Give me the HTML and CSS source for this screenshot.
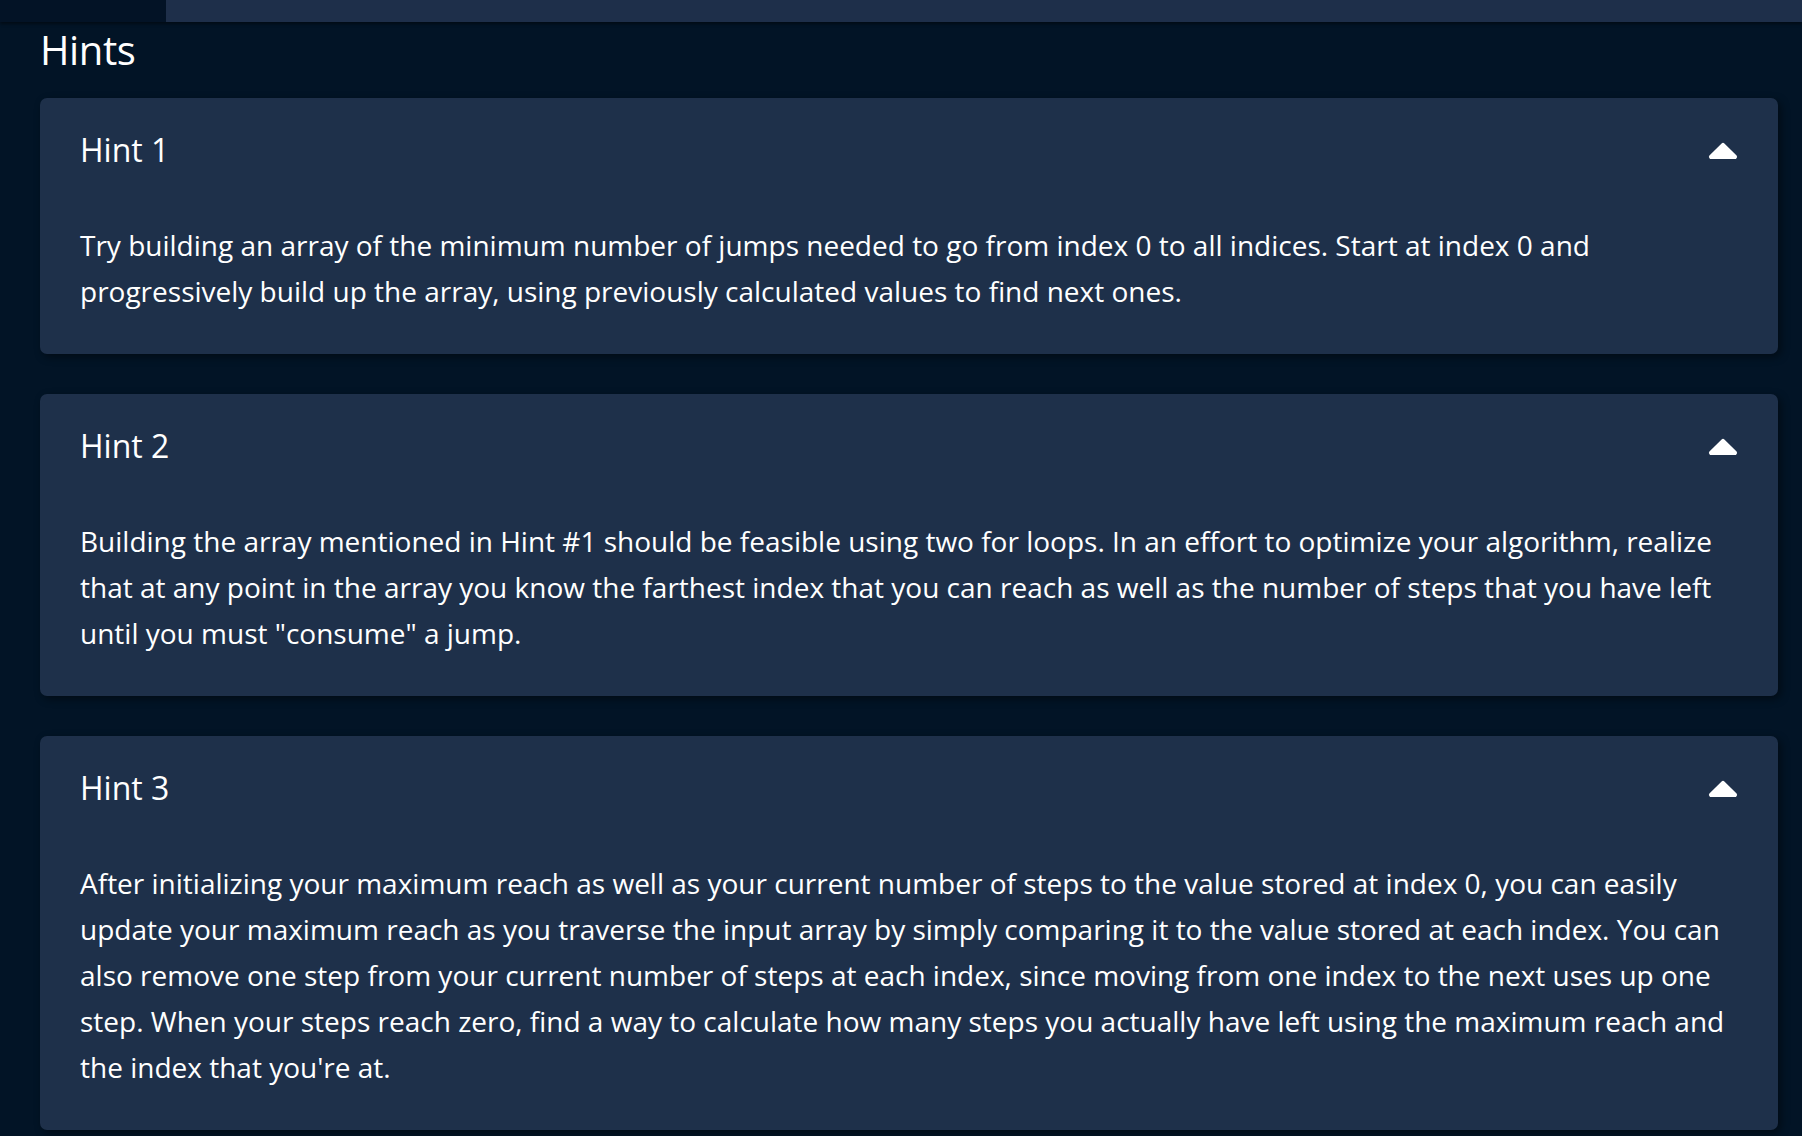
FILE: index.html
```html
<!DOCTYPE html>
<html lang="en">
<head>
<meta charset="utf-8">
<title>Hints</title>
<link rel="stylesheet" href="styles.css">
</head>
<body>
<div class="topbar">
  <div class="topbar-left"></div>
  <div class="topbar-right"></div>
</div>
<main class="hints">
  <h2 class="hints-title">Hints</h2>
  <section class="hint">
    <div class="hint-header">
      <span class="hint-name">Hint 1</span>
      <svg class="caret" width="30" height="17" viewBox="0 0 30 17"><path d="M13.6 1.4 Q15 0 16.4 1.4 L28.6 13.6 Q30 15 28 17 L2 17 Q0 15 1.4 13.6 Z" fill="#fff"/></svg>
    </div>
    <p class="hint-body">Try building an array of the minimum number of jumps needed to go from index 0 to all indices. Start at index 0 and progressively build up the array, using previously calculated values to find next ones.</p>
  </section>
  <section class="hint">
    <div class="hint-header">
      <span class="hint-name">Hint 2</span>
      <svg class="caret" width="30" height="17" viewBox="0 0 30 17"><path d="M13.6 1.4 Q15 0 16.4 1.4 L28.6 13.6 Q30 15 28 17 L2 17 Q0 15 1.4 13.6 Z" fill="#fff"/></svg>
    </div>
    <p class="hint-body">Building the array mentioned in Hint #1 should be feasible using two for loops. In an effort to optimize your algorithm, realize that at any point in the array you know the farthest index that you can reach as well as the number of steps that you have left until you must "consume" a jump.</p>
  </section>
  <section class="hint">
    <div class="hint-header">
      <span class="hint-name">Hint 3</span>
      <svg class="caret" width="30" height="17" viewBox="0 0 30 17"><path d="M13.6 1.4 Q15 0 16.4 1.4 L28.6 13.6 Q30 15 28 17 L2 17 Q0 15 1.4 13.6 Z" fill="#fff"/></svg>
    </div>
    <p class="hint-body">After initializing your maximum reach as well as your current number of steps to the value stored at index 0, you can easily update your maximum reach as you traverse the input array by simply comparing it to the value stored at each index. You can also remove one step from your current number of steps at each index, since moving from one index to the next uses up one step. When your steps reach zero, find a way to calculate how many steps you actually have left using the maximum reach and the index that you're at.</p>
  </section>
</main>
</body>
</html>
```
FILE: styles.css
```css
* { box-sizing: border-box; }
html, body {
  margin: 0;
  padding: 0;
  background: #021426;
  color: #fff;
  font-family: "Open Sans", "Noto Sans", sans-serif;
  overflow: hidden;
}
.topbar {
  display: flex;
  height: 22px;
  box-shadow: 0 2px 3px rgba(0, 0, 0, 0.45);
  position: relative;
}
.topbar-left {
  width: 166px;
  background: #031326;
}
.topbar-right {
  flex: 1;
  background: #1e2f4a;
}
.hints {
  padding: 0 24px 0 40px;
}
.hints-title {
  margin: 5px 0 25px;
  font-size: 40px;
  font-weight: 500;
  line-height: 46px;
  letter-spacing: -0.4px;
}
.hint {
  background: #1e304a;
  border-radius: 7px;
  padding: 34px 40px 40px;
  margin-bottom: 40px;
  box-shadow: 3px 3px 8px rgba(0, 0, 0, 0.45);
}
.hint-header {
  display: flex;
  align-items: center;
  justify-content: space-between;
  height: 36px;
}
.hint-name {
  font-size: 32px;
  line-height: 36px;
  font-weight: 400;
}
.caret {
  display: block;
  margin-top: 1px;
}
.hint-body {
  margin: 54px 0 0;
  font-size: 28px;
  line-height: 46px;
}
```
